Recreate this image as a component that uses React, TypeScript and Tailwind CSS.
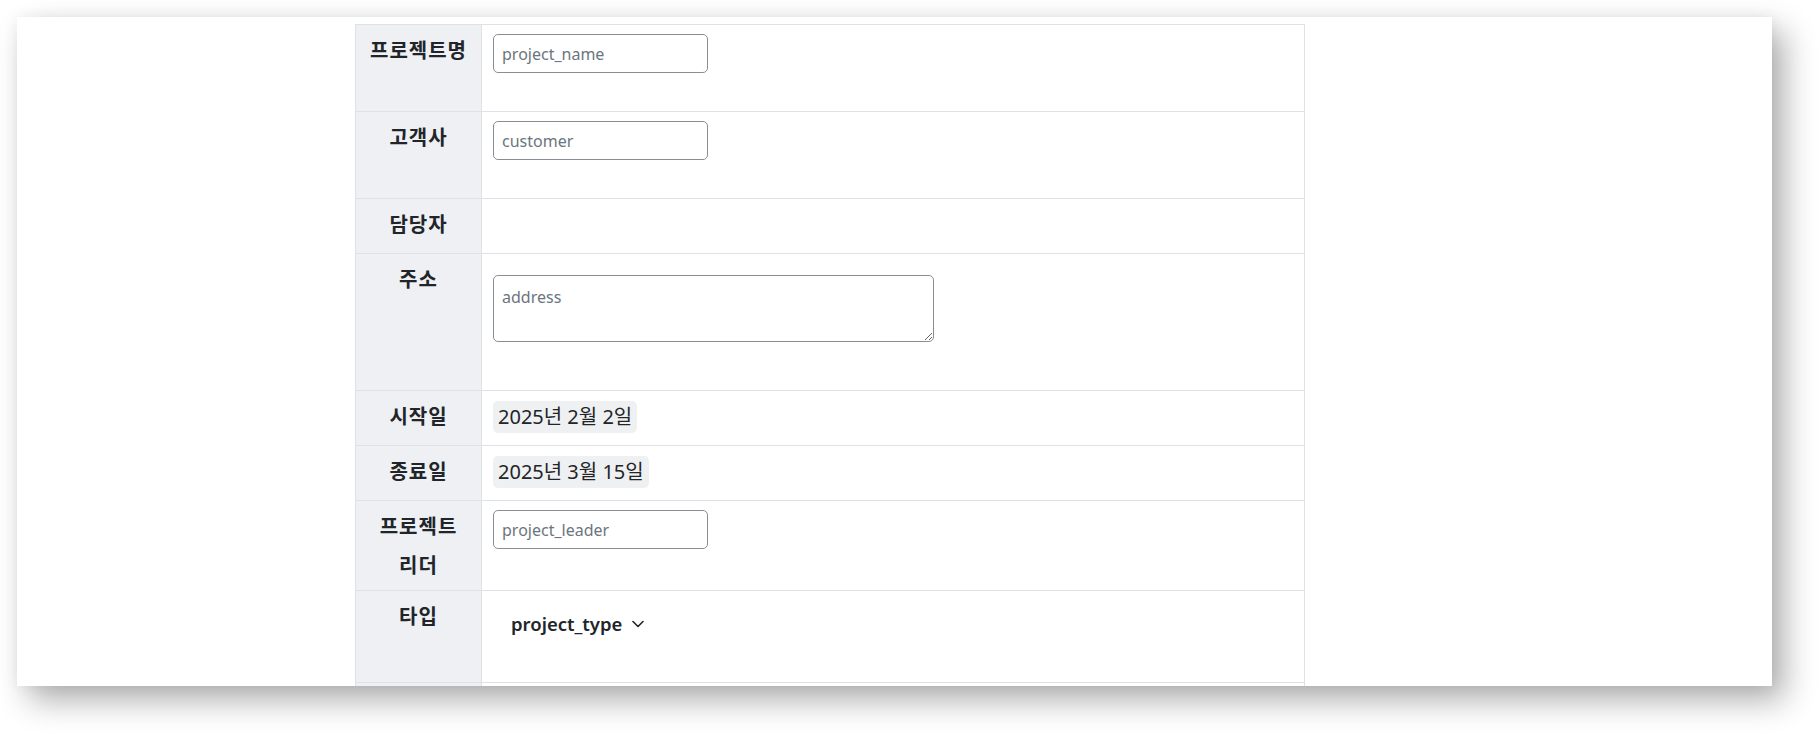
import React from 'react';

// project detail form, rendered as a two-column bordered table
const inputCls =
  'h-[39px] w-[215px] rounded-[5px] border border-[#8a8d93] bg-white px-[8px] text-[16px] text-[#212529] outline-none placeholder:text-[#6c757d]';

const TextInput: React.FC<{ name: string }> = ({ name }) => (
  <input type="text" placeholder={name} className={inputCls} />
);

const DateBadge: React.FC<{ children: React.ReactNode }> = ({ children }) => (
  <span className="inline-flex h-[32px] items-center rounded-[5px] bg-[#eff0f2] px-[5px] text-[20px] text-[#212529]">
    {children}
  </span>
);

type Row = { label: string; h: string; pad: string; content?: React.ReactNode };

const rows: Row[] = [
  { label: '프로젝트명', h: 'h-[87px]', pad: 'pt-[9px]', content: <TextInput name="project_name" /> },
  { label: '고객사', h: 'h-[87px]', pad: 'pt-[9px]', content: <TextInput name="customer" /> },
  { label: '담당자', h: 'h-[55px]', pad: 'pt-[9px]' },
  {
    label: '주소',
    h: 'h-[137px]',
    pad: 'pt-[21px]',
    content: (
      <textarea
        placeholder="address"
        className="block h-[67px] w-[441px] rounded-[5px] border border-[#8a8d93] bg-white px-[8px] pt-[9px] text-[16px] leading-[24px] text-[#212529] outline-none placeholder:text-[#6c757d]"
      />
    ),
  },
  { label: '시작일', h: 'h-[55px]', pad: 'pt-[10px]', content: <DateBadge>2025년 2월 2일</DateBadge> },
  { label: '종료일', h: 'h-[55px]', pad: 'pt-[10px]', content: <DateBadge>2025년 3월 15일</DateBadge> },
  { label: '프로젝트 리더', h: 'h-[90px]', pad: 'pt-[9px]', content: <TextInput name="project_leader" /> },
  {
    label: '타입',
    h: 'h-[92px]',
    pad: 'pt-[12px]',
    content: (
      <button type="button" className="flex items-center gap-[10px] px-[18px] py-[7px] text-[18.5px] font-semibold leading-[27px] text-[#212529]">
        project_type
        <svg width="12" height="8" viewBox="0 0 12 8" fill="none">
          <path d="M1 1.5 L6 6.5 L11 1.5" stroke="#212529" strokeWidth="1.6" strokeLinecap="round" strokeLinejoin="round" />
        </svg>
      </button>
    ),
  },
  { label: '', h: 'h-[60px]', pad: 'pt-[9px]' },
];

export default function App() {
  return (
    <div className="h-screen w-screen overflow-hidden bg-white pl-[17px] pt-[17px] font-['Noto_Sans','Noto_Sans_CJK_KR',sans-serif]">
      <div className="h-[669px] w-[1755px] overflow-hidden bg-white shadow-[12px_14px_30px_rgba(0,0,0,0.32),0_0_14px_rgba(0,0,0,0.05)]">
        <div className="pl-[338px] pt-[7px]">
          <div className="grid w-[950px] grid-cols-[126px_1fr] border-x border-t border-[#dee2e6]">
            {rows.map((r, i) => (
              <React.Fragment key={i}>
                <div
                  className={`${r.h} break-keep border-b border-r border-[#dee2e6] bg-[#eef0f3] px-[8px] pt-[6px] text-center text-[20px] font-bold leading-[39px] tracking-[1px] text-[#212529]`}
                >
                  {r.label}
                </div>
                <div className={`border-b border-[#dee2e6] pl-[11px] ${r.pad}`}>{r.content}</div>
              </React.Fragment>
            ))}
          </div>
        </div>
      </div>
    </div>
  );
}
